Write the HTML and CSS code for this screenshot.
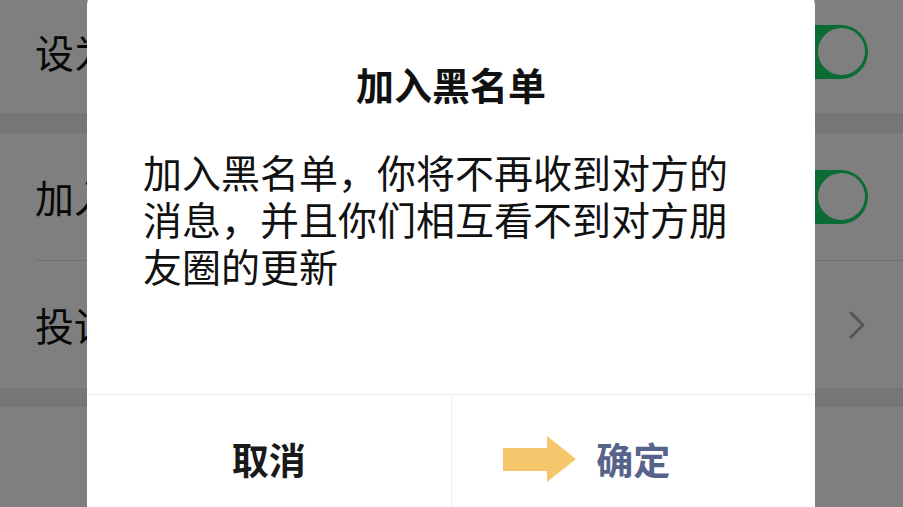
FILE: index.html
```html
<!DOCTYPE html>
<html lang="zh-CN">
<head>
<meta charset="utf-8">
<title>加入黑名单</title>
<link rel="stylesheet" href="styles.css">
</head>
<body>
<div class="page">
  <div class="row row-first">
    <span class="row-label">设为星标朋友</span>
    <span class="switch"><span class="knob"></span></span>
  </div>
  <div class="band band-a"></div>
  <div class="row">
    <span class="row-label">加入黑名单</span>
    <span class="switch"><span class="knob"></span></span>
  </div>
  <div class="sep"></div>
  <div class="row">
    <span class="row-label">投诉</span>
    <svg class="chev" width="18" height="30" viewBox="0 0 18 30"><path d="M3 3 L15 15 L3 27" fill="none" stroke="#aaaaaa" stroke-width="3" stroke-linecap="round" stroke-linejoin="round"/></svg>
  </div>
  <div class="band band-b"></div>
  <div class="row row-last"></div>
</div>
<div class="overlay"></div>
<div class="dialog">
  <div class="dialog-body">
    <h1 class="dialog-title">加入黑名单</h1>
    <p class="dialog-text">加入黑名单，你将不再收到对方的消息，并且你们相互看不到对方朋友圈的更新</p>
  </div>
  <div class="dialog-footer">
    <div class="btn btn-cancel">取消</div>
    <div class="btn btn-ok">
      <span class="ok-label">
        <svg class="arrow" width="73" height="46" viewBox="0 0 73 46"><polygon points="0,12 44,12 44,0 73,23 44,46 44,35 0,35" fill="#f5c66b"/></svg>
        确定
      </span>
    </div>
  </div>
</div>
</body>
</html>
```
FILE: styles.css
```css
html, body {
  margin: 0;
  padding: 0;
  width: 903px;
  height: 507px;
  overflow: hidden;
  background: #ffffff;
  font-family: "Noto Sans CJK SC", "Noto Sans", sans-serif;
}
.page {
  display: flex;
  flex-direction: column;
  height: 507px;
}
.row {
  height: 127px;
  display: flex;
  align-items: center;
  justify-content: space-between;
  padding: 0 35px;
  background: #ffffff;
  flex-shrink: 0;
  box-sizing: border-box;
}
.row-first {
  height: 113px;
  padding-bottom: 10px;
}
.row-last {
  flex: 1;
}
.row-label {
  font-size: 39px;
  color: #111111;
  white-space: nowrap;
  line-height: 1;
}
.band {
  background: #ededed;
  flex-shrink: 0;
}
.band-a { height: 20px; }
.band-b { height: 19px; }
.sep {
  height: 1px;
  margin-left: 35px;
  background: #e2e2e2;
  flex-shrink: 0;
}
.switch {
  width: 92px;
  height: 54px;
  border-radius: 27px;
  background: #14d66a;
  display: flex;
  align-items: center;
  justify-content: flex-end;
  padding: 0 3px;
  box-sizing: border-box;
}
.knob {
  width: 47px;
  height: 47px;
  border-radius: 50%;
  background: #ffffff;
}
.chev {
  margin-right: 2px;
}
.overlay {
  position: absolute;
  inset: 0;
  background: rgba(0, 0, 0, 0.5);
}
.dialog {
  position: absolute;
  left: 87px;
  top: -14px;
  width: 728px;
  height: 540px;
  background: #ffffff;
  border-radius: 20px;
  overflow: hidden;
  display: flex;
  flex-direction: column;
}
.dialog-body {
  height: 408px;
  box-sizing: border-box;
  padding: 74px 56px 0;
  flex-shrink: 0;
}
.dialog-title {
  margin: 0;
  font-size: 38px;
  font-weight: 700;
  line-height: 48px;
  text-align: center;
  color: #111111;
}
.dialog-text {
  margin: 40px 0 0;
  font-size: 39px;
  line-height: 47px;
  color: #111111;
}
.dialog-footer {
  border-top: 1px solid #ececec;
  display: flex;
  height: 132px;
}
.btn {
  flex: 1;
  display: flex;
  align-items: center;
  justify-content: center;
  font-size: 37px;
  font-weight: 700;
  padding-bottom: 4px;
}
.btn-cancel {
  color: #1a1a1a;
  border-right: 1px solid #ececec;
}
.btn-ok {
  color: #56648c;
}
.ok-label {
  position: relative;
}
.arrow {
  position: absolute;
  right: 100%;
  top: 50%;
  margin-right: 20px;
  margin-top: -23px;
}
```
